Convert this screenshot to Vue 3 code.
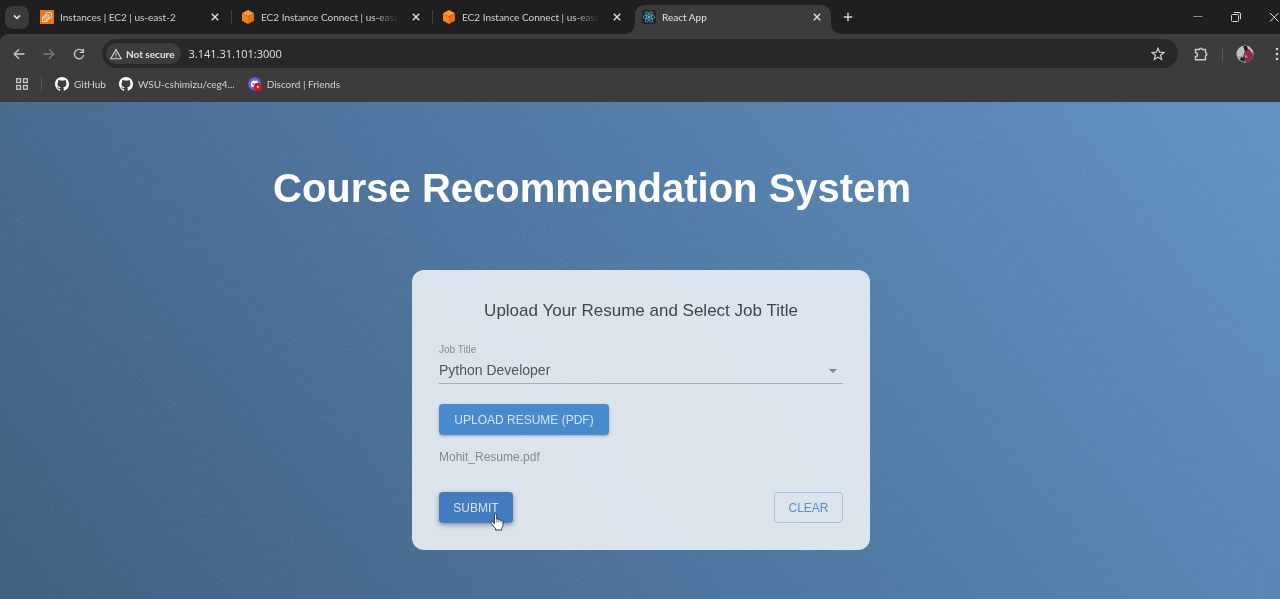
<script setup>
import { ref } from 'vue'

const tabs = [
  { title: 'Instances | EC2 | us-east-2', icon: 'ec2' },
  { title: 'EC2 Instance Connect | us-east-', icon: 'cube' },
  { title: 'EC2 Instance Connect | us-east-', icon: 'cube' },
  { title: 'React App', icon: 'react', active: true },
]
const bookmarks = [
  { title: 'GitHub', icon: 'github' },
  { title: 'WSU-cshimizu/ceg4...', icon: 'github' },
  { title: 'Discord | Friends', icon: 'discord' },
]
const address = ref('3.141.31.101:3000')
const jobTitle = ref('Python Developer')
const fileName = ref('Mohit_Resume.pdf')
</script>

<template>
  <div class="browser">
    <header class="chrome">
      <div class="tabstrip">
        <button class="tab-search" aria-label="Search tabs">
          <svg width="10" height="10" viewBox="0 0 10 10"><path d="M2 3.4 5 6.4 8 3.4" fill="none" stroke="#e3e3e3" stroke-width="1.6" /></svg>
        </button>
        <div v-for="(tab, i) in tabs" :key="i" class="tab" :class="{ active: tab.active }">
          <svg v-if="tab.icon === 'ec2'" class="fav" viewBox="0 0 14 14">
            <rect width="14" height="14" fill="#e07a1f" />
            <g fill="none" stroke="#fbe3cb" stroke-width=".9"><rect x="6" y="2.500" width="5.500" height="5.500" rx="1" /><rect x="4.200" y="5" width="4.800" height="4.800" rx="1" /><path d="M4.200 7H2.500V11.500H7V9.800M7.500 6.500 9.500 4.500" /></g>
          </svg>
          <svg v-else-if="tab.icon === 'cube'" class="fav" viewBox="0 0 14 14">
            <path d="M7 0 13 3.2 7 6.6 1 3.2Z" fill="#fa9a35" /><path d="M1 3.2 7 6.6V14L1 10.7Z" fill="#f58220" /><path d="M13 3.2 7 6.6V14l6-3.3Z" fill="#e86c1a" />
          </svg>
          <svg v-else class="fav" viewBox="0 0 14 14">
            <rect width="14" height="14" rx="2" fill="#20252c" />
            <g fill="none" stroke="#4fa9c0" stroke-width=".8"><ellipse cx="7" cy="7" rx="5.8" ry="2.2" /><ellipse cx="7" cy="7" rx="5.8" ry="2.2" transform="rotate(60 7 7)" /><ellipse cx="7" cy="7" rx="5.8" ry="2.2" transform="rotate(120 7 7)" /></g>
            <circle cx="7" cy="7" r="1.1" fill="#7fdcf0" />
          </svg>
          <span class="tab-title">{{ tab.title }}</span>
          <button class="icon-btn" aria-label="Close tab">
            <svg width="10" height="10" viewBox="0 0 10 10"><path d="M1.8 1.8 8.2 8.2M8.2 1.8 1.8 8.2" stroke="#dedede" stroke-width="1.4" /></svg>
          </button>
        </div>
        <button class="icon-btn new-tab" aria-label="New tab">
          <svg width="10" height="10" viewBox="0 0 10 10"><path d="M5 .8V9.2M.8 5H9.2" stroke="#d8d8d8" stroke-width="1.4" /></svg>
        </button>
        <div class="window-controls">
          <button class="icon-btn" aria-label="Minimize"><svg width="12" height="12" viewBox="0 0 12 12"><path d="M1.5 5.5h9" stroke="#8c8c8c" /></svg></button>
          <button class="icon-btn" aria-label="Restore"><svg width="12" height="12" viewBox="0 0 12 12"><g fill="none" stroke="#d6d6d6"><rect x="1.5" y="3.5" width="7" height="7" rx="1" /><path d="M3.8 1.5H9A1.5 1.5 0 0 1 10.500 3V8.200" /></g></svg></button>
          <button class="icon-btn" aria-label="Close window"><svg width="12" height="12" viewBox="0 0 12 12"><path d="M2 2 10.500 10.500M10.500 2 2 10.500" stroke="#e4e4e4" /></svg></button>
        </div>
      </div>

      <div class="toolbar">
        <nav class="nav-buttons">
          <button class="icon-btn" aria-label="Back"><svg width="12" height="12" viewBox="0 0 12 12"><path d="M11.500 6H1.500M6 1.200 1.200 6 6 10.800" fill="none" stroke="#c7c7c7" stroke-width="1.300" /></svg></button>
          <button class="icon-btn" aria-label="Forward"><svg width="12" height="12" viewBox="0 0 12 12"><path d="M.5 6H10.500M6 1.200 10.800 6 6 10.800" fill="none" stroke="#7b7b7b" stroke-width="1.300" /></svg></button>
          <button class="icon-btn" aria-label="Reload"><svg width="12" height="12" viewBox="0 0 12 12"><path d="M10.200 3.700A4.700 4.700 0 1 0 10.700 7.200" fill="none" stroke="#c7c7c7" stroke-width="1.400" /><path d="M11 .8V5H6.800V3.700H9.700V.8Z" fill="#c7c7c7" /></svg></button>
        </nav>
        <div class="omnibox">
          <button class="security">
            <svg width="12" height="12" viewBox="0 0 12 12"><path d="M6 1.500 11.200 10.800H.8Z" fill="none" stroke="#dcdcdc" stroke-width="1.100" /><path d="M6 4.800V7.700M6 8.500V9.600" stroke="#dcdcdc" /></svg>
            Not secure
          </button>
          <input v-model="address" class="address" aria-label="Address" />
          <button class="icon-btn" aria-label="Bookmark this page"><svg width="14" height="14" viewBox="0 0 14 14"><path d="M7 1.300 8.600 5.200 12.900 5.500 9.600 8.200 10.600 12.400 7 10.100 3.400 12.400 4.400 8.200 1.100 5.500 5.400 5.200Z" fill="none" stroke="#d2d2d2" stroke-width="1.200" /></svg></button>
        </div>
        <button class="icon-btn extensions" aria-label="Extensions"><svg width="16" height="16" viewBox="0 0 16 16"><path d="M2.500 3.500H6.500C6.500 1.800 9 1.800 9 3.500H12.500V7C14.300 7 14.300 9.700 12.500 9.700V13.800H2.500V10.500C5.200 10.500 5.200 6.800 2.500 6.800Z" fill="none" stroke="#c9c9c9" stroke-width="1.400" stroke-linejoin="round" /></svg></button>
        <span class="rule"></span>
        <button class="icon-btn avatar" aria-label="Profile">
          <svg width="18" height="18" viewBox="0 0 18 18">
            <clipPath id="face"><circle cx="9" cy="9" r="8.500" /></clipPath>
            <g clip-path="url(#face)"><rect width="18" height="18" fill="#bfc2c0" /><path d="M0 11H7L10 18H0Z" fill="#9daaa4" /><path d="M9 5 13 4 17 9V16L10 18 7 12Z" fill="#8d2e4f" /><path d="M7 1H11L12 5 9 6Z" fill="#20191c" /><path d="M5 12 9 13 8 17 4 15Z" fill="#16241f" /><path d="M9 9 12 12 9 13Z" fill="#cf6888" /></g>
          </svg>
        </button>
        <button class="icon-btn menu" aria-label="Menu"><svg width="4" height="14" viewBox="0 0 4 14"><g fill="#d2d2d2"><circle cx="2" cy="2" r="1.300" /><circle cx="2" cy="7" r="1.300" /><circle cx="2" cy="12" r="1.300" /></g></svg></button>
      </div>

      <nav class="bookmarks">
        <button class="icon-btn apps" aria-label="Apps"><svg width="12" height="12" viewBox="0 0 12 12"><g fill="none" stroke="#c7c7c7" stroke-width="1.300"><rect x=".7" y=".7" width="3.800" height="3.800" /><rect x="7.500" y=".7" width="3.800" height="3.800" /><rect x=".7" y="7.500" width="3.800" height="3.800" /><rect x="7.500" y="7.500" width="3.800" height="3.800" /></g></svg></button>
        <span class="rule"></span>
        <a v-for="mark in bookmarks" :key="mark.title" href="#" class="bookmark">
          <svg v-if="mark.icon === 'github'" class="fav" viewBox="0 0 16 16"><path fill="#fff" d="M8 0C3.580 0 0 3.580 0 8c0 3.540 2.290 6.530 5.470 7.590.4.070.55-.17.55-.38 0-.19-.01-.82-.01-1.490-2.010.37-2.530-.49-2.690-.94-.09-.23-.48-.94-.82-1.130-.28-.15-.68-.52-.01-.53.63-.01 1.080.58 1.230.82.72 1.210 1.870.87 2.330.66.07-.52.28-.87.51-1.070-1.780-.2-3.640-.89-3.640-3.950 0-.87.31-1.590.82-2.150-.08-.2-.36-1.020.08-2.120 0 0 .67-.21 2.200.82a7.600 7.600 0 0 1 4 0c1.530-1.040 2.200-.82 2.200-.82.44 1.100.16 1.920.08 2.120.51.56.82 1.270.82 2.150 0 3.070-1.870 3.750-3.650 3.950.29.25.54.73.54 1.480 0 1.070-.01 1.930-.01 2.200 0 .21.15.46.55.38A8 8 0 0 0 16 8c0-4.420-3.580-8-8-8Z" /></svg>
          <svg v-else class="fav" viewBox="0 0 14 14"><circle cx="6.700" cy="6.800" r="6.600" fill="#5865e8" /><path d="M3 9.800C2.600 7.300 3 5 4.200 4L6 3.600 7 4.200 8 3.600 9.800 4.200 11 8 8 10Z" fill="#fff" /><circle cx="5.300" cy="7" r=".9" fill="#5865e8" /><circle cx="9.800" cy="9.900" r="4.100" fill="#dc1425" /><circle cx="9.800" cy="9.900" r="1.100" fill="#fff" /></svg>
          {{ mark.title }}
        </a>
      </nav>
    </header>

    <main class="page">
      <svg class="grain" aria-hidden="true">
        <filter id="paper"><feTurbulence type="fractalNoise" baseFrequency="0.7 0.3" numOctaves="2" seed="4" /><feColorMatrix type="saturate" values="0" /><feComponentTransfer><feFuncA type="linear" slope="0" intercept="1" /></feComponentTransfer></filter>
        <rect width="100%" height="100%" filter="url(#paper)" />
      </svg>
      <h1>Course Recommendation System</h1>
      <form class="card" @submit.prevent>
        <h2>Upload Your Resume and Select Job Title</h2>
        <div class="field">
          <label for="job">Job Title</label>
          <select id="job" v-model="jobTitle"><option>Python Developer</option></select>
          <svg class="arrow" width="8" height="4" viewBox="0 0 8 4"><path d="M0 0H8L4 4Z" fill="#7c848c" /></svg>
        </div>
        <button type="button" class="btn upload">UPLOAD RESUME (PDF)</button>
        <p class="file">{{ fileName }}</p>
        <div class="actions">
          <button class="btn submit">SUBMIT
            <svg class="pointer" width="14" height="18" viewBox="0 0 14 18"><path d="M4.500 1.800C4.500.3 6.700.3 6.700 1.800V6.300C7.300 5.700 8.700 5.900 8.800 6.900 9.500 6.300 10.800 6.600 10.900 7.600 11.700 7.100 13 7.600 13 8.700V11.500C13 13.300 12.200 14.300 11.700 15.300V17H5.500V15.400C4.300 14.300 2.700 12.300 1.300 10.300.5 9.100 1.900 8.200 2.900 9.100L4.500 10.700Z" fill="#fff" stroke="#202836" stroke-width=".9" /><path d="M6.700 6.500V9.500M8.800 7V9.500M10.900 7.700V9.700" stroke="#4a5260" stroke-width=".7" /></svg>
          </button>
          <button type="button" class="btn clear">CLEAR</button>
        </div>
      </form>
    </main>
  </div>
</template>

<style>
body { margin: 0; }
</style>

<style scoped>
* { box-sizing: border-box; }
.browser { display: flex; flex-direction: column; min-height: 100vh; font-family: "Liberation Sans", Arial, sans-serif; }
button { border: 0; padding: 0; background: none; font: inherit; color: inherit; }
svg { display: block; flex: none; }
.chrome { background: #1f1f1f; color: #d2d2d2; font-family: Lato, "Open Sans", sans-serif; font-size: 10px; overflow: hidden; }
.tabstrip { display: flex; align-items: center; height: 34px; padding-left: 5px; }
.tab-search { display: flex; align-items: center; justify-content: center; width: 24px; height: 23px; border-radius: 8px; background: #3b3b3b; margin-right: 2px; }
.icon-btn { display: flex; align-items: center; justify-content: center; flex: none; width: 16px; height: 20px; }
.fav { width: 14px; height: 14px; }
.tab { position: relative; display: flex; align-items: center; gap: 6px; width: 201px; height: 34px; padding: 0 9px; }
.tab:not(.active)::after { content: ""; position: absolute; right: 0; top: 10px; width: 1px; height: 14px; background: #444; }
.tab:nth-child(4)::after { display: none; }
.tab-title { flex: 1; min-width: 0; white-space: nowrap; mask-image: linear-gradient(to right, #000 calc(100% - 28px), transparent calc(100% - 4px)); }
.tab.active { align-self: flex-end; width: 196px; height: 29px; margin-left: 1px; padding: 0 6px 5px 7px; background: #3c3c3c; border-radius: 9px 9px 0 0; color: #e3e3e3; }
.tab.active::before, .tab.active::after { content: ""; position: absolute; bottom: 0; width: 9px; height: 9px; }
.tab.active::before { right: 100%; background: radial-gradient(circle at 0 0, transparent 8px, #3c3c3c 9px); }
.tab.active::after { left: 100%; background: radial-gradient(circle at 100% 0, transparent 8px, #3c3c3c 9px); }
.new-tab { margin-left: 9px; }
.window-controls { display: flex; gap: 22px; margin: 0 -2px 0 auto; }
.toolbar { display: flex; align-items: center; padding: 5px 0 0 11px; background: #3c3c3c; border-radius: 8px 0 0 0; }
.nav-buttons { display: flex; gap: 14px; margin-right: 15px; }
.omnibox { flex: 1; min-width: 0; display: flex; align-items: center; height: 29px; padding: 0 12px 0 4px; border-radius: 15px; background: #282828; }
.security { display: flex; align-items: center; gap: 4px; height: 21px; padding: 0 7px 0 4px; border-radius: 11px; background: #3c3c3c; font-weight: 700; color: #e3e3e3; white-space: nowrap; }
.address { flex: 1; min-width: 0; border: 0; padding: 0; margin-left: 7px; outline: 0; background: none; color: #e3e3e3; font-family: "Open Sans", sans-serif; font-size: 11px; }
.extensions { margin: 0 13px 0 15px; }
.rule { width: 1px; height: 14px; background: #5c5c5c; }
.avatar { width: 18px; margin: 0 19px 0 13px; }
.menu { width: 7px; }
.bookmarks { display: flex; align-items: center; height: 34px; padding: 0 0 2px 14px; background: #3c3c3c; }
.apps { margin-right: 11px; }
.bookmark { display: flex; align-items: center; gap: 5px; margin-left: 13px; color: #d2d2d2; text-decoration: none; white-space: nowrap; }

.page { position: relative; flex: 1; display: flex; flex-direction: column; align-items: center; padding: 62px 15px 49px 17px; background: linear-gradient(52deg, #3d5b7c 0%, #4b75a2 52%, #5c8fbd 100%); }
.grain { position: absolute; inset: 0; width: 100%; height: 100%; opacity: .2; mix-blend-mode: soft-light; }
h1 { position: relative; margin: 0 0 58px; padding-right: 98px; color: #fff; font-size: 40px; line-height: 48px; }
.card { position: relative; width: 100%; max-width: 458px; padding: 27px; border-radius: 12px; background: rgba(235, 240, 244, .9); color: #3e464e; }
h2 { margin: 0; font-size: 17px; font-weight: 400; line-height: 28px; text-align: center; }
.field { position: relative; display: flex; flex-direction: column; margin-top: 18px; }
.field label { font-size: 10px; line-height: 14px; color: #848c95; }
.field select { appearance: none; width: 100%; height: 27px; padding: 0; border: 0; border-bottom: 1px solid #a6afb8; border-radius: 0; background: none; font: inherit; font-size: 14px; color: #50575e; }
.arrow { position: absolute; right: 6px; bottom: 11px; pointer-events: none; }
.btn { display: flex; align-items: center; justify-content: center; height: 31px; border-radius: 4px; font-size: 12px; color: #d5e3f2; }
.upload { width: 170px; margin-top: 20px; background: #478bce; box-shadow: 0 1px 3px rgba(50, 70, 100, .4); }
.file { margin: 12px 0 0; font-size: 12px; line-height: 20px; color: #848b93; }
.actions { display: flex; justify-content: space-between; margin-top: 25px; }
.submit { position: relative; width: 74px; background: #437cbf; box-shadow: 0 2px 5px rgba(50, 70, 100, .5); }
.pointer { position: absolute; left: 51px; top: 21px; }
.clear { width: 69px; border: 1px solid #9fc3e6; color: #5890c8; }
</style>
